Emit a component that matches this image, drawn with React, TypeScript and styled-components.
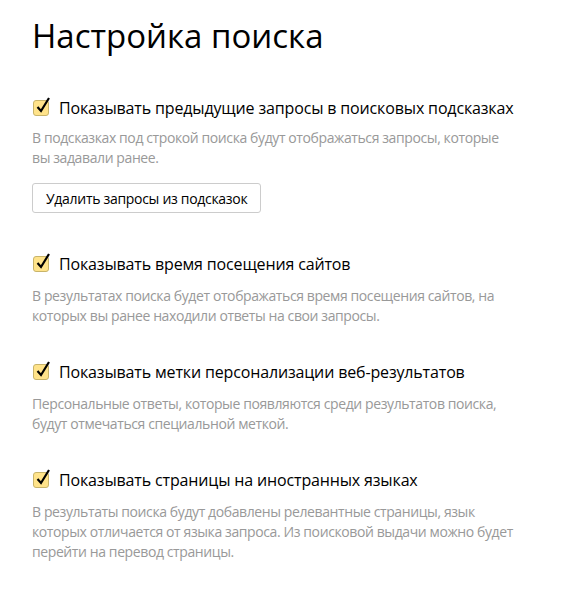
import React from "react";
import styled, { createGlobalStyle } from "styled-components";

const Global = createGlobalStyle`
  body {
    margin: 0;
    background: #fff;
    font-family: "Open Sans", "Noto Sans", sans-serif;
    color: #000;
  }
`;

const Page = styled.div`
  padding: 14px 32px 20px 32px;
`;

const Title = styled.h1`
  margin: 0 0 38px 0;
  font-size: 33px;
  font-weight: 400;
  line-height: 44px;
`;

const Section = styled.div`
  margin-bottom: 34px;
`;

const Row = styled.label`
  display: flex;
  align-items: center;
  gap: 10px;
  font-size: 16px;
  line-height: 24px;
  letter-spacing: -0.15px;
`;

const Box = styled.span`
  position: relative;
  width: 16px;
  height: 16px;
  margin-left: 1px;
  border: 1px solid #c8b46a;
  border-radius: 3px;
  background: #ffe38a;
  box-sizing: border-box;
  flex-shrink: 0;
  > svg {
    position: absolute;
    left: 1px;
    top: -5px;
  }
`;

const Desc = styled.p<{ $first?: boolean }>`
  margin: ${(p) => (p.$first ? "8px" : "10px")} 0 0 0;
  max-width: 500px;
  font-size: 14px;
  line-height: 20px;
  letter-spacing: -0.4px;
  color: #999;
  white-space: pre-line;
`;

const Button = styled.button`
  margin: 15px 0 5px 0;
  height: 30px;
  padding: 0 13px;
  font-family: inherit;
  font-size: 14px;
  letter-spacing: -0.3px;
  color: #000;
  background: #fff;
  border: 1px solid #ccc;
  border-radius: 3px;
`;

function Check() {
  return (
    <Box>
      <svg width="16" height="18" viewBox="0 0 16 18">
        <path d="M2.5 11 L6 15 L14 2" fill="none" stroke="#000" strokeWidth="2.2" />
      </svg>
    </Box>
  );
}

const items = [
  {
    label: "Показывать предыдущие запросы в поисковых подсказках",
    desc: "В подсказках под строкой поиска будут отображаться запросы, которые\nвы задавали ранее.",
    button: "Удалить запросы из подсказок",
  },
  {
    label: "Показывать время посещения сайтов",
    desc: "В результатах поиска будет отображаться время посещения сайтов, на которых вы ранее находили ответы на свои запросы.",
  },
  {
    label: "Показывать метки персонализации веб-результатов",
    desc: "Персональные ответы, которые появляются среди результатов поиска, будут отмечаться специальной меткой.",
  },
  {
    label: "Показывать страницы на иностранных языках",
    desc: "В результаты поиска будут добавлены релевантные страницы, язык которых отличается от языка запроса. Из поисковой выдачи можно будет перейти на перевод страницы.",
  },
];

export default function App() {
  return (
    <Page>
      <Global />
      <Title>Настройка поиска</Title>
      {items.map((it, i) => (
        <Section key={it.label}>
          <Row>
            <Check />
            {it.label}
          </Row>
          <Desc $first={i === 0}>{it.desc}</Desc>
          {it.button && <Button>{it.button}</Button>}
        </Section>
      ))}
    </Page>
  );
}
